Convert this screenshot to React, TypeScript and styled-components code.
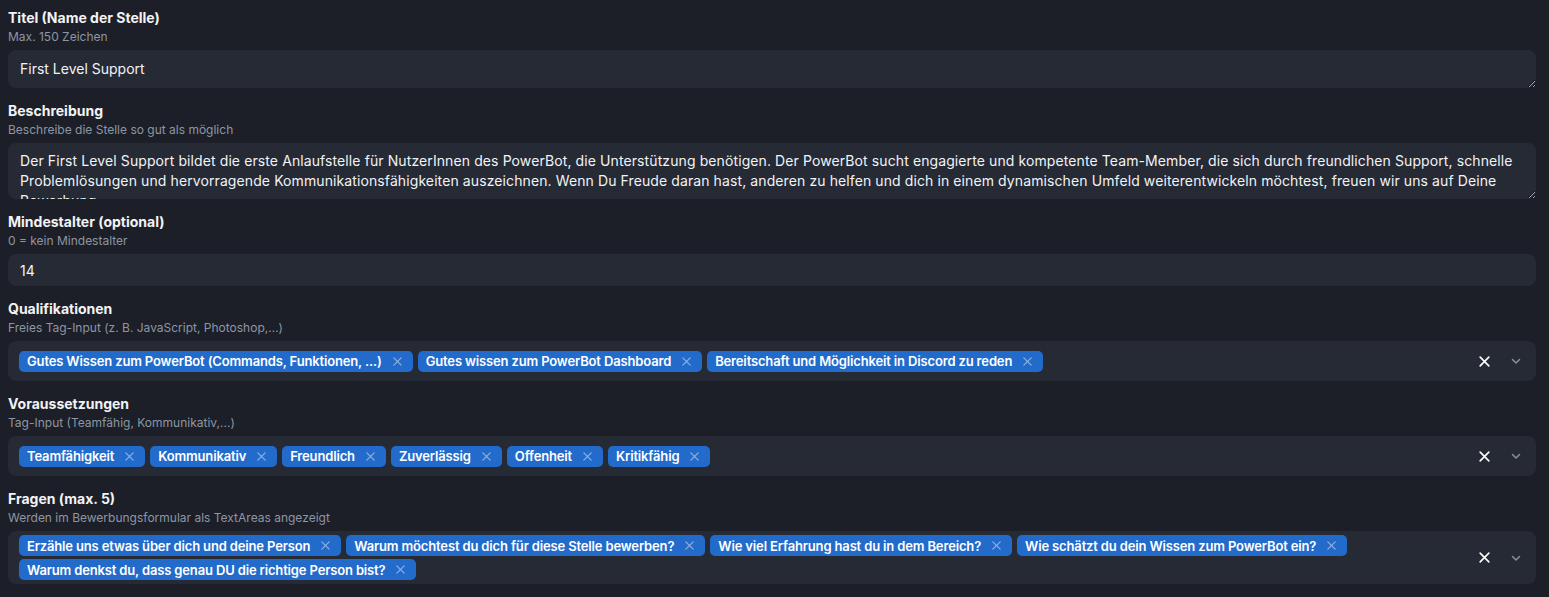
import React from 'react'
import styled, { createGlobalStyle } from 'styled-components'

const GlobalStyle = createGlobalStyle`
  body {
    margin: 0;
    padding: 8px 13px 0 8px;
    background: #1c1f27;
    font-family: Inter, 'Noto Sans', sans-serif;
    color: #e9ecef;
  }
`

const description =
  'Der First Level Support bildet die erste Anlaufstelle für NutzerInnen des PowerBot, die Unterstützung benötigen. Der PowerBot sucht engagierte und kompetente Team-Member, die sich durch freundlichen Support, schnelle Problemlösungen und hervorragende Kommunikationsfähigkeiten auszeichnen. Wenn Du Freude daran hast, anderen zu helfen und dich in einem dynamischen Umfeld weiterentwickeln möchtest, freuen wir uns auf Deine Bewerbung.'

const qualifications = [
  'Gutes Wissen zum PowerBot (Commands, Funktionen, ...)',
  'Gutes wissen zum PowerBot Dashboard',
  'Bereitschaft und Möglichkeit in Discord zu reden',
]

const requirements = ['Teamfähigkeit', 'Kommunikativ', 'Freundlich', 'Zuverlässig', 'Offenheit', 'Kritikfähig']

const questions = [
  'Erzähle uns etwas über dich und deine Person',
  'Warum möchtest du dich für diese Stelle bewerben?',
  'Wie viel Erfahrung hast du in dem Bereich?',
  'Wie schätzt du dein Wissen zum PowerBot ein?',
  'Warum denkst du, dass genau DU die richtige Person bist?',
]

const CloseIcon = ({ size, color, weight = 1.4 }: { size: number; color: string; weight?: number }) => (
  <svg width={size} height={size} viewBox="0 0 12 12" fill="none">
    <path d="M2 2L10 10M10 2L2 10" stroke={color} strokeWidth={weight} strokeLinecap="round" />
  </svg>
)

const ChevronIcon = () => (
  <svg width="12" height="12" viewBox="0 0 12 12" fill="none">
    <path d="M2.5 4.5L6 8L9.5 4.5" stroke="#8a909c" strokeWidth="1.5" strokeLinecap="round" strokeLinejoin="round" />
  </svg>
)

const TagInput: React.FC<{ tags: string[] }> = ({ tags }) => (
  <TagBox>
    <TagList>
      {tags.map(tag => (
        <Tag key={tag}>
          {tag}
          <CloseIcon size={11} color="#8fb1e0" weight={1.3} />
        </Tag>
      ))}
    </TagList>
    <Controls>
      <CloseIcon size={13} color="#ffffff" weight={1.5} />
      <ChevronIcon />
    </Controls>
  </TagBox>
)

export default function App() {
  return (
    <>
      <GlobalStyle />
      <Form>
        <Field>
          <Label>Titel (Name der Stelle)</Label>
          <Hint>Max. 150 Zeichen</Hint>
          <TitleArea rows={1} defaultValue="First Level Support" />
        </Field>
        <Field>
          <Label>Beschreibung</Label>
          <Hint>Beschreibe die Stelle so gut als möglich</Hint>
          <DescArea defaultValue={description} />
        </Field>
        <Field>
          <Label>Mindestalter (optional)</Label>
          <Hint>0 = kein Mindestalter</Hint>
          <NumberInput type="text" defaultValue="14" />
        </Field>
        <Field>
          <Label>Qualifikationen</Label>
          <Hint>Freies Tag-Input (z. B. JavaScript, Photoshop,...)</Hint>
          <TagInput tags={qualifications} />
        </Field>
        <Field>
          <Label>Voraussetzungen</Label>
          <Hint>Tag-Input (Teamfähig, Kommunikativ,...)</Hint>
          <TagInput tags={requirements} />
        </Field>
        <Field>
          <Label>Fragen (max. 5)</Label>
          <Hint>Werden im Bewerbungsformular als TextAreas angezeigt</Hint>
          <TagInput tags={questions} />
        </Field>
      </Form>
    </>
  )
}

const Form = styled.div`
  display: flex;
  flex-direction: column;
  gap: 13px;
`

const Field = styled.div`
  display: flex;
  flex-direction: column;
`

const Label = styled.div`
  font-size: 14px;
  font-weight: 700;
  line-height: 20px;
  color: #f1f3f5;
`

const Hint = styled.div`
  font-size: 12px;
  line-height: 18px;
  color: #8d96a5;
  margin-bottom: 4px;
`

const baseInput = `
  box-sizing: border-box;
  width: 100%;
  background: #252a35;
  border: none;
  border-radius: 8px;
  color: #f1f3f5;
  font-family: Inter, 'Noto Sans', sans-serif;
  font-size: 14px;
  outline: none;
`

const TitleArea = styled.textarea`
  ${baseInput}
  display: block;
  height: 38px;
  padding: 9px 12px;
  line-height: 20px;
  resize: vertical;
`

const DescArea = styled.textarea`
  ${baseInput}
  display: block;
  height: 56px;
  padding: 8px 12px;
  line-height: 20px;
  letter-spacing: 0.1px;
  resize: vertical;
  overflow-y: scroll;

  &::-webkit-scrollbar {
    width: 8px;
  }
  &::-webkit-scrollbar-track {
    background: #1a1b1e;
  }
  &::-webkit-scrollbar-thumb {
    background: #474b54;
    border-radius: 4px;
  }
  &::-webkit-scrollbar-corner {
    background: #ffffff;
  }
`

const NumberInput = styled.input`
  ${baseInput}
  display: block;
  height: 32px;
  padding: 0 12px;
`

const TagBox = styled.div`
  box-sizing: border-box;
  display: flex;
  align-items: center;
  min-height: 40px;
  padding: 4px 12px 4px 11px;
  background: #252a35;
  border-radius: 8px;
`

const TagList = styled.div`
  flex: 1;
  display: flex;
  flex-wrap: wrap;
  gap: 3px 5px;
`

const Tag = styled.span`
  display: inline-flex;
  align-items: center;
  gap: 10px;
  height: 21px;
  padding: 0 10px 0 8px;
  border-radius: 5px;
  background: #236bcb;
  color: #ffffff;
  font-size: 13px;
  font-weight: 600;
  letter-spacing: -0.15px;
  white-space: nowrap;
`

const Controls = styled.div`
  display: flex;
  align-items: center;
  gap: 19px;
  padding-right: 2px;
`
